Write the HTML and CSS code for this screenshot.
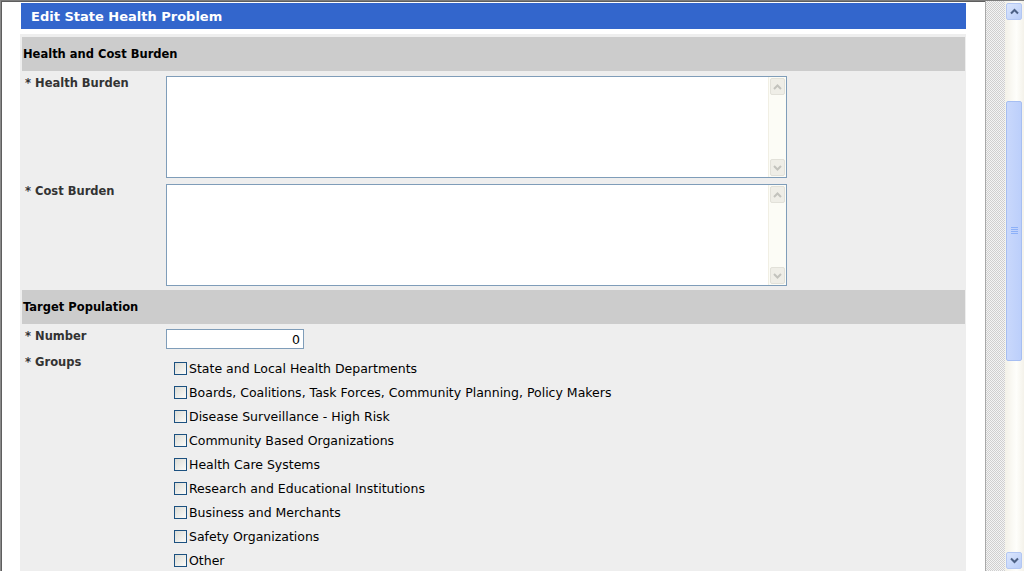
FILE: index.html
```html
<!DOCTYPE html>
<html lang="en">
<head>
    <meta charset="UTF-8">
    <title>Edit State Health Problem</title>
    <link rel="stylesheet" href="styles.css">
</head>
<body>
    <div class="frame">
        <!-- Page content -->
        <div class="content">
            <h1 class="title">Edit State Health Problem</h1>

            <div class="panel">
                <div class="section-header">Health and Cost Burden</div>
                <div class="section-body">
                    <div class="row">
                        <label class="field-label">* Health Burden</label>
                        <div class="memo">
                            <textarea class="memo-text"></textarea>
                            <div class="memo-scroll">
                                <span class="memo-btn"><svg width="9" height="6" viewBox="0 0 9 6"><path d="M1 5 L4.5 1.5 L8 5" fill="none" stroke="#c3c3bd" stroke-width="2"/></svg></span>
                                <span class="memo-btn"><svg width="9" height="6" viewBox="0 0 9 6"><path d="M1 1 L4.5 4.5 L8 1" fill="none" stroke="#c3c3bd" stroke-width="2"/></svg></span>
                            </div>
                        </div>
                    </div>
                    <div class="row">
                        <label class="field-label">* Cost Burden</label>
                        <div class="memo">
                            <textarea class="memo-text"></textarea>
                            <div class="memo-scroll">
                                <span class="memo-btn"><svg width="9" height="6" viewBox="0 0 9 6"><path d="M1 5 L4.5 1.5 L8 5" fill="none" stroke="#c3c3bd" stroke-width="2"/></svg></span>
                                <span class="memo-btn"><svg width="9" height="6" viewBox="0 0 9 6"><path d="M1 1 L4.5 4.5 L8 1" fill="none" stroke="#c3c3bd" stroke-width="2"/></svg></span>
                            </div>
                        </div>
                    </div>
                </div>

                <div class="section-header">Target Population</div>
                <div class="section-body">
                    <div class="row">
                        <label class="field-label">* Number</label>
                        <input type="text" class="number-field" value="0">
                    </div>
                    <div class="row">
                        <label class="field-label">* Groups</label>
                        <ul class="group-list">
                            <li><span class="check"></span>State and Local Health Departments</li>
                            <li><span class="check"></span>Boards, Coalitions, Task Forces, Community Planning, Policy Makers</li>
                            <li><span class="check"></span>Disease Surveillance - High Risk</li>
                            <li><span class="check"></span>Community Based Organizations</li>
                            <li><span class="check"></span>Health Care Systems</li>
                            <li><span class="check"></span>Research and Educational Institutions</li>
                            <li><span class="check"></span>Business and Merchants</li>
                            <li><span class="check"></span>Safety Organizations</li>
                            <li><span class="check"></span>Other</li>
                        </ul>
                    </div>
                </div>
            </div>
        </div>

        <!-- Frame splitter -->
        <div class="splitter"></div>

        <!-- Window scrollbar -->
        <div class="scrollbar">
            <span class="sb-btn"><svg width="9" height="7" viewBox="0 0 9 7"><path d="M1 5.5 L4.5 2 L8 5.5" fill="none" stroke="#4d6185" stroke-width="2"/></svg></span>
            <div class="sb-track sb-track-top"></div>
            <div class="sb-thumb">
                <svg width="7" height="8" viewBox="0 0 7 8"><path d="M0 0.5h7M0 2.5h7M0 4.5h7M0 6.5h7" stroke="#8cb0f8" stroke-width="1"/></svg>
            </div>
            <div class="sb-track"></div>
            <span class="sb-btn"><svg width="9" height="7" viewBox="0 0 9 7"><path d="M1 1.5 L4.5 5 L8 1.5" fill="none" stroke="#4d6185" stroke-width="2"/></svg></span>
        </div>
    </div>
</body>
</html>
```

FILE: styles.css
```css
:root {
    /* Colors */
    --title-bg-color: #3366cc;
    --panel-bg-color: #eeeeee;
    --header-bg-color: #cccccc;
    --label-text-color: #333333;
    --field-border-color: #7f9db9;
    --check-border-color: #1c5180;
}

html, body {
    margin: 0;
    padding: 0;
    height: 100%;
    overflow: hidden;
}

body {
    font-family: 'DejaVu Sans', Verdana, sans-serif;
    font-size: 12.5px;
    background-color: #ffffff;
}

.frame {
    display: flex;
    height: 100%;
    box-sizing: border-box;
    border-top: 1px solid #7c7c7c;
    border-left: 1px solid #8a8a8a;
    box-shadow: inset 1px 1px 0 #5e5e5e;
}

/* Content column */
.content {
    flex: 1;
    padding: 2px 19px 0 19px;
    min-width: 0;
}

.title {
    margin: 0 0 5px 1px;
    height: 26px;
    line-height: 27px;
    padding-left: 10px;
    background-color: var(--title-bg-color);
    color: #ffffff;
    font-size: 13px;
    font-weight: bold;
}

.panel {
    background-color: var(--panel-bg-color);
    padding: 3px 1px 0 2px;
    height: 600px;
}

.section-header {
    background-color: var(--header-bg-color);
    height: 34px;
    line-height: 35px;
    padding-left: 1px;
    font-size: 11.5px;
    font-weight: bold;
    color: #000000;
}

.section-body {
    padding: 2px 0 1px;
}

.row {
    display: grid;
    grid-template-columns: 144px 1fr;
    padding: 3px 0;
    align-items: start;
}

.field-label {
    padding-left: 3px;
    line-height: 14px;
    font-size: 11.5px;
    font-weight: bold;
    color: var(--label-text-color);
}

/* Text areas */
.memo {
    display: flex;
    width: 619px;
    height: 100px;
    border: 1px solid var(--field-border-color);
    background-color: #ffffff;
}

.memo-text {
    flex: 1;
    border: none;
    resize: none;
    outline: none;
    margin: 0;
    padding: 2px;
    font-family: inherit;
    font-size: 12px;
}

.memo-scroll {
    width: 17px;
    display: flex;
    flex-direction: column;
    justify-content: space-between;
    background-color: #fcfcf6;
    border-left: 1px solid #f1efe4;
}

.memo-btn {
    height: 15px;
    margin: 1px;
    display: flex;
    align-items: center;
    justify-content: center;
    background-color: #efeee7;
    border: 1px solid #e2e1d9;
    border-radius: 2px;
}

.number-field {
    width: 138px;
    height: 20px;
    box-sizing: border-box;
    margin: 0;
    border: 1px solid var(--field-border-color);
    padding: 0 3px;
    text-align: right;
    font-family: inherit;
    font-size: 12.5px;
    color: #000000;
    background-color: #ffffff;
}

/* Checkbox list */
.group-list {
    list-style: none;
    margin: 1px 0 0 8px;
    padding: 0;
}

.group-list li {
    display: flex;
    align-items: center;
    height: 24px;
    color: #000000;
}

.check {
    width: 11px;
    height: 11px;
    margin-right: 2px;
    border: 1px solid var(--check-border-color);
    background: linear-gradient(135deg, #dcdcd5, #fbfbf9);
}

/* Frame splitter */
.splitter {
    width: 19px;
    border-left: 1px solid #a9a9a9;
    background-color: #e6e6e6;
    background-image: repeating-conic-gradient(#cfcfcf 0 25%, #f4f4f4 0 50%);
    background-size: 2px 2px;
}

/* Window scrollbar */
.scrollbar {
    width: 19px;
    display: flex;
    flex-direction: column;
    padding: 2px 2px 2px 1px;
    box-sizing: border-box;
    background: linear-gradient(90deg, #f3f1e8, #fefefb 60%, #f4f2ea);
}

.sb-btn {
    height: 15px;
    display: flex;
    align-items: center;
    justify-content: center;
    background: linear-gradient(135deg, #dbe6fd, #b9cdf8);
    border: 1px solid #b3c7f3;
    border-radius: 2px;
}

.sb-track {
    flex: 1;
}

.sb-track-top {
    flex: 0 0 81px;
}

.sb-thumb {
    height: 258px;
    display: flex;
    align-items: center;
    justify-content: center;
    background: linear-gradient(90deg, #c9d8fc, #bccffb);
    border: 1px solid #a6bef2;
    border-radius: 2px;
}
```
